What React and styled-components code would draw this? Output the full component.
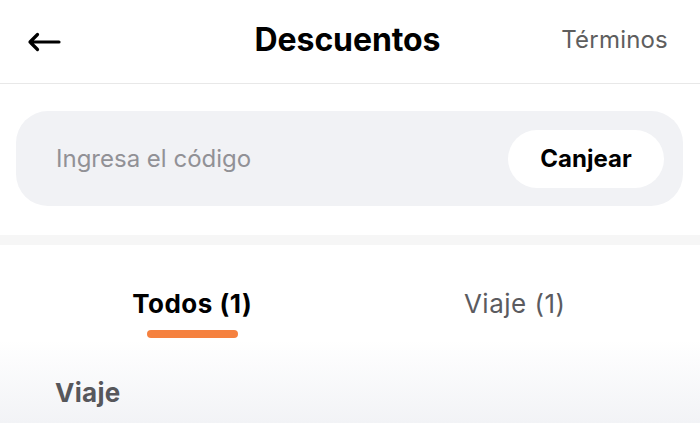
import React, { useState } from 'react';
import styled, { createGlobalStyle } from 'styled-components';

const GlobalStyle = createGlobalStyle`
  *, *::before, *::after {
    box-sizing: border-box;
  }
  html, body {
    margin: 0;
    padding: 0;
    background: #ffffff;
  }
  body {
    font-family: Inter, "Noto Sans", sans-serif;
    -webkit-font-smoothing: antialiased;
  }
`;

const Screen = styled.div`
  width: 700px;
  height: 423px;
  overflow: hidden;
  display: flex;
  flex-direction: column;
  background: #ffffff;
`;

const Header = styled.header`
  height: 84px;
  flex-shrink: 0;
  display: grid;
  grid-template-columns: 1fr auto 1fr;
  align-items: center;
  padding: 0 32px 4px 27px;
  border-bottom: 1px solid #e8e8e8;
`;

const BackButton = styled.button`
  justify-self: start;
  border: 0;
  background: none;
  padding: 5px 0 0;
  display: flex;
  color: #000;
`;

const Title = styled.h1`
  margin: 0;
  font-size: 32px;
  font-weight: 700;
  letter-spacing: -0.1px;
  color: #000;
`;

const TermsLink = styled.a`
  justify-self: end;
  font-size: 24px;
  color: #5e5e5e;
  letter-spacing: 0.2px;
`;

const CodeSection = styled.div`
  padding: 27px 17px 29px 16px;
`;

const CodeBox = styled.div`
  height: 95px;
  border-radius: 32px;
  background: #f1f2f5;
  display: flex;
  align-items: center;
  justify-content: space-between;
  padding: 0 19px 0 38px;
`;

const CodeInput = styled.input`
  flex: 1;
  border: 0;
  background: transparent;
  font-family: Inter, "Noto Sans", sans-serif;
  font-size: 24px;
  color: #000;
  outline: none;

  &::placeholder {
    color: #919196;
  }
`;

const RedeemButton = styled.button`
  width: 156px;
  height: 58px;
  border: 0;
  border-radius: 29px;
  background: #ffffff;
  font-family: Inter, "Noto Sans", sans-serif;
  font-size: 24px;
  font-weight: 700;
  color: #000;
`;

const Band = styled.div`
  height: 10px;
  flex-shrink: 0;
  background: #f6f6f6;
`;

const Tabs = styled.div`
  display: grid;
  grid-template-columns: 1fr 1fr;
  padding: 0 24px 0 31px;
  height: 95px;
  flex-shrink: 0;
`;

const Tab = styled.button`
  border: 0;
  background: none;
  display: flex;
  flex-direction: column;
  align-items: center;
  justify-content: flex-start;
  padding: 43px 0 0;
  font-family: Inter, "Noto Sans", sans-serif;
  font-size: 26px;
  letter-spacing: 0.5px;
  font-weight: ${p => (p.$active ? 700 : 400)};
  color: ${p => (p.$active ? '#000' : '#5b5b5f')};
`;

const Indicator = styled.span`
  margin-top: 11px;
  width: 91px;
  height: 8px;
  border-radius: 4px;
  background: ${p => (p.$visible ? '#f5813f' : 'transparent')};
`;

const ListArea = styled.div`
  flex: 1;
  background: linear-gradient(#ffffff 0%, #f2f3f6 100%);
  padding: 37px 55px 0;
`;

const SectionLabel = styled.h2`
  margin: 0;
  font-size: 26px;
  font-weight: 700;
  letter-spacing: 0.3px;
  color: #57575b;
`;

const ArrowLeft = () => (
  <svg width="34" height="20" viewBox="0 0 34 20" fill="none">
    <path d="M32 10H3M10.5 2.5L3 10l7.5 7.5" stroke="currentColor" strokeWidth="3.2" strokeLinecap="round" strokeLinejoin="round" />
  </svg>
);

const tabs = [
  { id: 'all', label: 'Todos (1)' },
  { id: 'trip', label: 'Viaje (1)' },
];

export default function App() {
  const [active, setActive] = useState('all');
  const [code, setCode] = useState('');

  return (
    <>
      <GlobalStyle />
      <Screen>
        <Header>
          <BackButton aria-label="Atrás">
            <ArrowLeft />
          </BackButton>
          <Title>Descuentos</Title>
          <TermsLink>Términos</TermsLink>
        </Header>
        <CodeSection>
          <CodeBox>
            <CodeInput placeholder="Ingresa el código" value={code} onChange={e => setCode(e.target.value)} />
            <RedeemButton>Canjear</RedeemButton>
          </CodeBox>
        </CodeSection>
        <Band />
        <Tabs>
          {tabs.map(t => (
            <Tab key={t.id} $active={active === t.id} onClick={() => setActive(t.id)}>
              {t.label}
              <Indicator $visible={active === t.id} />
            </Tab>
          ))}
        </Tabs>
        <ListArea>
          <SectionLabel>Viaje</SectionLabel>
        </ListArea>
      </Screen>
    </>
  );
}
